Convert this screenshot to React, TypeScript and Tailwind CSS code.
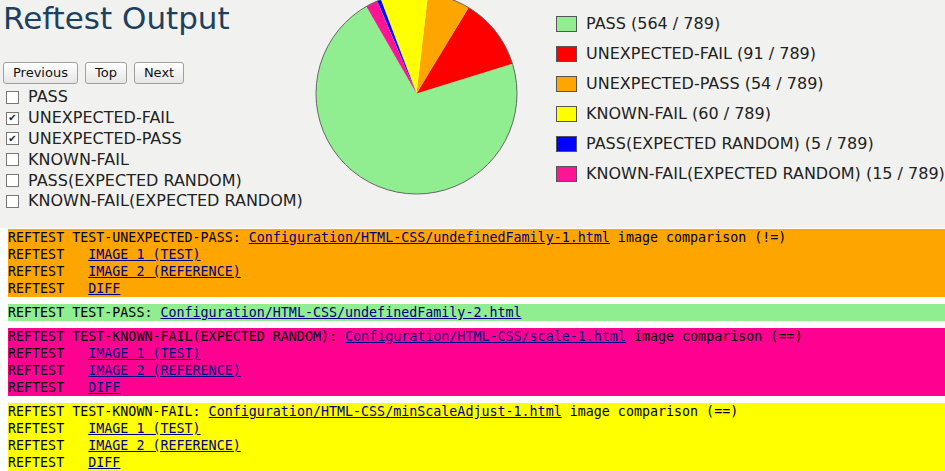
import React from "react";

const data = [
  { label: "PASS", n: 564, color: "#90ee90" },
  { label: "UNEXPECTED-FAIL", n: 91, color: "#ff0000" },
  { label: "UNEXPECTED-PASS", n: 54, color: "#ffa500" },
  { label: "KNOWN-FAIL", n: 60, color: "#ffff00" },
  { label: "PASS(EXPECTED RANDOM)", n: 5, color: "#0000ff" },
  { label: "KNOWN-FAIL(EXPECTED RANDOM)", n: 15, color: "#ff1493" },
];
const total = 789;

function Pie() {
  const cx = 102.5;
  const cy = 93.5;
  const r = 100.5;
  let a = 119.9;
  const slices = data.map((d) => {
    const span = (d.n / total) * 360;
    const a0 = a;
    const a1 = a + span;
    a = a1;
    const p = (deg: number) => {
      const rad = (deg * Math.PI) / 180;
      return [cx + r * Math.cos(rad), cy - r * Math.sin(rad)];
    };
    const [x0, y0] = p(a0);
    const [x1, y1] = p(a1);
    const large = span > 180 ? 1 : 0;
    return (
      <path
        key={d.label}
        d={`M${cx} ${cy} L${x0} ${y0} A${r} ${r} 0 ${large} 0 ${x1} ${y1} Z`}
        fill={d.color}
      />
    );
  });
  return (
    <svg width="205" height="197" className="block shrink-0">
      {slices}
      <circle cx={cx} cy={cy} r={r} fill="none" stroke="#666" strokeWidth="1" />
    </svg>
  );
}

const sans = "font-['DejaVu_Sans',sans-serif]";

function Lines({ bg, kind, link, cmp, images }: { bg: string; kind: string; link: string; cmp?: string; images: boolean }) {
  return (
    <div className={`${bg} whitespace-pre`}>
      <div>
        {`REFTEST ${kind}: `}
        <a className="text-[#000080] underline">{link}</a>
        {cmp ? ` ${cmp}` : ""}
      </div>
      {images && (
        <>
          <div>
            {"REFTEST   "}
            <a className="text-[#000080] underline">IMAGE 1 (TEST)</a>
          </div>
          <div>
            {"REFTEST   "}
            <a className="text-[#000080] underline">IMAGE 2 (REFERENCE)</a>
          </div>
          <div>
            {"REFTEST   "}
            <a className="text-[#000080] underline">DIFF</a>
          </div>
        </>
      )}
    </div>
  );
}

export default function App() {
  const checked = [false, true, true, false, false, false];
  return (
    <div className="w-[945px] h-[471px] overflow-hidden bg-[#f1f2f0] text-[#1a1a1a]">
      <div className="flex h-[228px]">
        <div className="w-[314px] shrink-0 pl-[3px]">
          <h1 className={`text-[31px] leading-[36px] text-[#1e3f5e] ${sans} whitespace-nowrap`}>Reftest Output</h1>
          <div className={`mt-[26px] flex gap-[7px] text-[13px] ${sans}`}>
            {["Previous", "Top", "Next"].map((b) => (
              <button
                key={b}
                className="h-[22px] px-[9px] rounded-[3px] border border-[#a0a0a0] bg-gradient-to-b from-white to-[#e6e6e6] text-[#111]"
              >
                {b}
              </button>
            ))}
          </div>
          <div className={`mt-[3px] text-[16px] ${sans} text-[#222]`}>
            {data.map((d, i) => (
              <div key={d.label} className="flex items-center h-[20.8px]">
                <span className="w-[13px] h-[13px] ml-[3px] mr-[9px] border border-[#777] bg-white flex items-center justify-center text-[10px] leading-none">
                  {checked[i] ? "✔" : ""}
                </span>
                <span>{d.label}</span>
              </div>
            ))}
          </div>
        </div>
        <Pie />
        <div className={`ml-[37px] pt-[9px] text-[16px] ${sans} text-[#222]`}>
          {data.map((d) => (
            <div key={d.label} className="flex items-center h-[30px]">
              <span className="w-[21px] h-[16px] border border-[#555] mr-[9px] shrink-0" style={{ backgroundColor: d.color }} />
              <span className="whitespace-nowrap">
                {d.label} ({d.n} / {total})
              </span>
            </div>
          ))}
        </div>
      </div>
      <div className="bg-white pl-[8px] pt-[1px] flex flex-col gap-[7px] font-['DejaVu_Sans_Mono',monospace] text-[13.33px] leading-[17px] text-black">
        <Lines bg="bg-[#ffa500]" kind="TEST-UNEXPECTED-PASS" link="Configuration/HTML-CSS/undefinedFamily-1.html" cmp="image comparison (!=)" images />
        <Lines bg="bg-[#90ee90]" kind="TEST-PASS" link="Configuration/HTML-CSS/undefinedFamily-2.html" images={false} />
        <Lines bg="bg-[#ff0090]" kind="TEST-KNOWN-FAIL(EXPECTED RANDOM)" link="Configuration/HTML-CSS/scale-1.html" cmp="image comparison (==)" images />
        <Lines bg="bg-[#ffff00]" kind="TEST-KNOWN-FAIL" link="Configuration/HTML-CSS/minScaleAdjust-1.html" cmp="image comparison (==)" images />
      </div>
    </div>
  );
}
